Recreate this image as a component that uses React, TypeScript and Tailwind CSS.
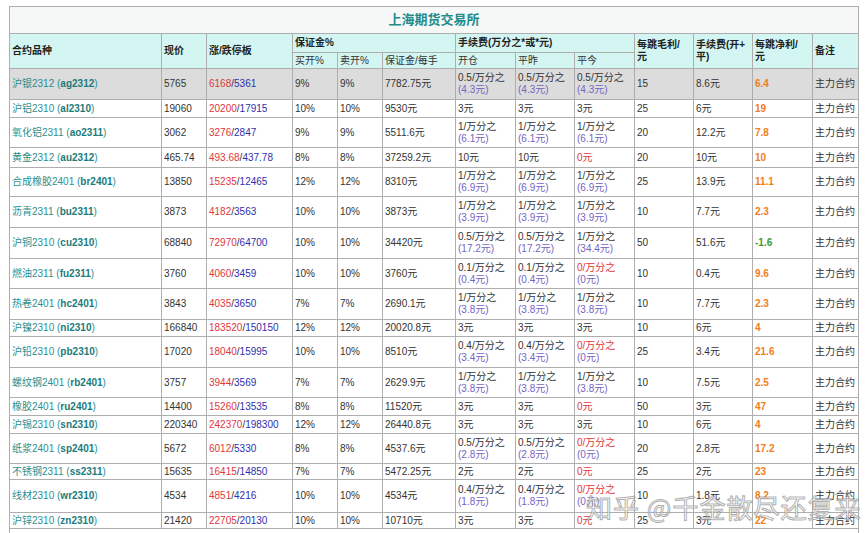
type Fee = { a: string; b?: string; red?: boolean };

type Row = {
  name: string;
  code: string;
  price: string;
  up: string;
  down: string;
  buy: string;
  sell: string;
  margin: string;
  open: Fee;
  yest: Fee;
  today: Fee;
  tick: string;
  fee: string;
  net: string;
  h: string;
  gray?: boolean;
  loss?: boolean;
};

const f = (a: string, b?: string, red?: boolean): Fee => ({ a, b, red });

const rows: Row[] = [
  { name: '沪银2312', code: 'ag2312', price: '5765', up: '6168', down: '5361', buy: '9%', sell: '9%', margin: '7782.75元', open: f('0.5/万分之', '4.3元'), yest: f('0.5/万分之', '4.3元'), today: f('0.5/万分之', '4.3元'), tick: '15', fee: '8.6元', net: '6.4', h: 'h-[31px]', gray: true },
  { name: '沪铝2310', code: 'al2310', price: '19060', up: '20200', down: '17915', buy: '10%', sell: '10%', margin: '9530元', open: f('3元'), yest: f('3元'), today: f('3元'), tick: '25', fee: '6元', net: '19', h: 'h-[18px]' },
  { name: '氧化铝2311', code: 'ao2311', price: '3062', up: '3276', down: '2847', buy: '9%', sell: '9%', margin: '5511.6元', open: f('1/万分之', '6.1元'), yest: f('1/万分之', '6.1元'), today: f('1/万分之', '6.1元'), tick: '20', fee: '12.2元', net: '7.8', h: 'h-[30px]' },
  { name: '黄金2312', code: 'au2312', price: '465.74', up: '493.68', down: '437.78', buy: '8%', sell: '8%', margin: '37259.2元', open: f('10元'), yest: f('10元'), today: f('0元', undefined, true), tick: '20', fee: '10元', net: '10', h: 'h-[20px]' },
  { name: '合成橡胶2401', code: 'br2401', price: '13850', up: '15235', down: '12465', buy: '12%', sell: '12%', margin: '8310元', open: f('1/万分之', '6.9元'), yest: f('1/万分之', '6.9元'), today: f('1/万分之', '6.9元'), tick: '25', fee: '13.9元', net: '11.1', h: 'h-[29px]' },
  { name: '沥青2311', code: 'bu2311', price: '3873', up: '4182', down: '3563', buy: '10%', sell: '10%', margin: '3873元', open: f('1/万分之', '3.9元'), yest: f('1/万分之', '3.9元'), today: f('1/万分之', '3.9元'), tick: '10', fee: '7.7元', net: '2.3', h: 'h-[31px]' },
  { name: '沪铜2310', code: 'cu2310', price: '68840', up: '72970', down: '64700', buy: '10%', sell: '10%', margin: '34420元', open: f('0.5/万分之', '17.2元'), yest: f('0.5/万分之', '17.2元'), today: f('1/万分之', '34.4元'), tick: '50', fee: '51.6元', net: '-1.6', h: 'h-[31px]', loss: true },
  { name: '燃油2311', code: 'fu2311', price: '3760', up: '4060', down: '3459', buy: '10%', sell: '10%', margin: '3760元', open: f('0.1/万分之', '0.4元'), yest: f('0.1/万分之', '0.4元'), today: f('0/万分之', '0元', true), tick: '10', fee: '0.4元', net: '9.6', h: 'h-[30px]' },
  { name: '热卷2401', code: 'hc2401', price: '3843', up: '4035', down: '3650', buy: '7%', sell: '7%', margin: '2690.1元', open: f('1/万分之', '3.8元'), yest: f('1/万分之', '3.8元'), today: f('1/万分之', '3.8元'), tick: '10', fee: '7.7元', net: '2.3', h: 'h-[31px]' },
  { name: '沪镍2310', code: 'ni2310', price: '166840', up: '183520', down: '150150', buy: '12%', sell: '12%', margin: '20020.8元', open: f('3元'), yest: f('3元'), today: f('3元'), tick: '10', fee: '6元', net: '4', h: 'h-[17px]' },
  { name: '沪铅2310', code: 'pb2310', price: '17020', up: '18040', down: '15995', buy: '10%', sell: '10%', margin: '8510元', open: f('0.4/万分之', '3.4元'), yest: f('0.4/万分之', '3.4元'), today: f('0/万分之', '0元', true), tick: '25', fee: '3.4元', net: '21.6', h: 'h-[31px]' },
  { name: '螺纹钢2401', code: 'rb2401', price: '3757', up: '3944', down: '3569', buy: '7%', sell: '7%', margin: '2629.9元', open: f('1/万分之', '3.8元'), yest: f('1/万分之', '3.8元'), today: f('1/万分之', '3.8元'), tick: '10', fee: '7.5元', net: '2.5', h: 'h-[30px]' },
  { name: '橡胶2401', code: 'ru2401', price: '14400', up: '15260', down: '13535', buy: '8%', sell: '8%', margin: '11520元', open: f('3元'), yest: f('3元'), today: f('0元', undefined, true), tick: '50', fee: '3元', net: '47', h: 'h-[18px]' },
  { name: '沪锡2310', code: 'sn2310', price: '220340', up: '242370', down: '198300', buy: '12%', sell: '12%', margin: '26440.8元', open: f('3元'), yest: f('3元'), today: f('3元'), tick: '10', fee: '6元', net: '4', h: 'h-[18px]' },
  { name: '纸浆2401', code: 'sp2401', price: '5672', up: '6012', down: '5330', buy: '8%', sell: '8%', margin: '4537.6元', open: f('0.5/万分之', '2.8元'), yest: f('0.5/万分之', '2.8元'), today: f('0/万分之', '0元', true), tick: '20', fee: '2.8元', net: '17.2', h: 'h-[30px]' },
  { name: '不锈钢2311', code: 'ss2311', price: '15635', up: '16415', down: '14850', buy: '7%', sell: '7%', margin: '5472.25元', open: f('2元'), yest: f('2元'), today: f('0元', undefined, true), tick: '25', fee: '2元', net: '23', h: 'h-[16px]' },
  { name: '线材2310', code: 'wr2310', price: '4534', up: '4851', down: '4216', buy: '10%', sell: '10%', margin: '4534元', open: f('0.4/万分之', '1.8元'), yest: f('0.4/万分之', '1.8元'), today: f('0/万分之', '0元', true), tick: '10', fee: '1.8元', net: '8.2', h: 'h-[33px]' },
  { name: '沪锌2310', code: 'zn2310', price: '21420', up: '22705', down: '20130', buy: '10%', sell: '10%', margin: '10710元', open: f('3元'), yest: f('3元'), today: f('0元', undefined, true), tick: '25', fee: '3元', net: '22', h: 'h-[16px]' },
];

const cell = 'border border-[#aeaeae] px-[2px] py-0 align-middle leading-[12px]';
const head = `${cell} bg-[#d3f6f3] font-bold text-[#222]`;

function FeeCell({ v }: { v: Fee }) {
  return (
    <td className={cell}>
      <span className={v.red ? 'text-[#e0363c]' : ''}>{v.a}</span>
      {v.b && (
        <>
          <br />
          <span className="text-[#7465c2]">({v.b})</span>
        </>
      )}
    </td>
  );
}

export default function App() {
  return (
    <div className="relative min-h-[533px] bg-white pl-[9px] pt-[6px] font-['Liberation_Sans','Noto_Sans_CJK_SC',sans-serif] text-[10px] text-[#333]">
      <table className="w-[849px] table-fixed border-collapse">
        <colgroup>
          <col className="w-[152px]" />
          <col className="w-[45px]" />
          <col className="w-[86px]" />
          <col className="w-[45px]" />
          <col className="w-[45px]" />
          <col className="w-[73px]" />
          <col className="w-[60px]" />
          <col className="w-[59px]" />
          <col className="w-[60px]" />
          <col className="w-[59px]" />
          <col className="w-[59px]" />
          <col className="w-[60px]" />
          <col className="w-[46px]" />
        </colgroup>
        <thead>
          <tr className="h-[27px]">
            <th colSpan={13} className="border border-[#aeaeae] bg-[#f6f7f7] text-center align-middle text-[13px] font-bold text-[#1f8b8b]">
              上海期货交易所
            </th>
          </tr>
          <tr className="h-[19px] text-left">
            <th rowSpan={2} className={head}>合约品种</th>
            <th rowSpan={2} className={head}>现价</th>
            <th rowSpan={2} className={head}>涨/跌停板</th>
            <th colSpan={3} className={head}>保证金%</th>
            <th colSpan={3} className={head}>手续费(万分之*或*元)</th>
            <th rowSpan={2} className={head}>每跳毛利/<br />元</th>
            <th rowSpan={2} className={head}>手续费(开+<br />平)</th>
            <th rowSpan={2} className={head}>每跳净利/<br />元</th>
            <th rowSpan={2} className={head}>备注</th>
          </tr>
          <tr className="h-[16px] text-left">
            <th className={`${cell} bg-[#d3f6f3] font-normal`}>买开%</th>
            <th className={`${cell} bg-[#d3f6f3] font-normal`}>卖开%</th>
            <th className={`${cell} bg-[#d3f6f3] font-normal`}>保证金/每手</th>
            <th className={`${cell} bg-[#d3f6f3] font-normal`}>开仓</th>
            <th className={`${cell} bg-[#d3f6f3] font-normal`}>平昨</th>
            <th className={`${cell} bg-[#d3f6f3] font-normal`}>平今</th>
          </tr>
        </thead>
        <tbody>
          {rows.map((r) => (
            <tr key={r.code} className={`${r.h} ${r.gray ? 'bg-[#dcdcdc]' : 'bg-white'}`}>
              <td className={`${cell} text-[#2b8f8f]`}>
                {r.name} (<b className="text-[#1c7b7b]">{r.code}</b>)
              </td>
              <td className={cell}>{r.price}</td>
              <td className={cell}>
                <span className="text-[#e0363c]">{r.up}</span>/<span className="text-[#2e2fae]">{r.down}</span>
              </td>
              <td className={cell}>{r.buy}</td>
              <td className={cell}>{r.sell}</td>
              <td className={cell}>{r.margin}</td>
              <FeeCell v={r.open} />
              <FeeCell v={r.yest} />
              <FeeCell v={r.today} />
              <td className={cell}>{r.tick}</td>
              <td className={cell}>{r.fee}</td>
              <td className={`${cell} font-bold ${r.loss ? 'text-[#3b9a3b]' : 'text-[#f07d22]'}`}>{r.net}</td>
              <td className={cell}>主力合约</td>
            </tr>
          ))}
          <tr className="h-[20px] bg-white">
            <td colSpan={13} className="border-x border-t border-[#aeaeae]" />
          </tr>
        </tbody>
      </table>
      <span className="pointer-events-none absolute left-[586px] top-[494px] font-['Noto_Sans_CJK_SC',sans-serif] text-[26px] leading-none tracking-[1px] text-white/70 [-webkit-text-stroke:1px_rgba(110,110,110,0.55)]">
        知乎 @千金散尽还复来
      </span>
    </div>
  );
}
